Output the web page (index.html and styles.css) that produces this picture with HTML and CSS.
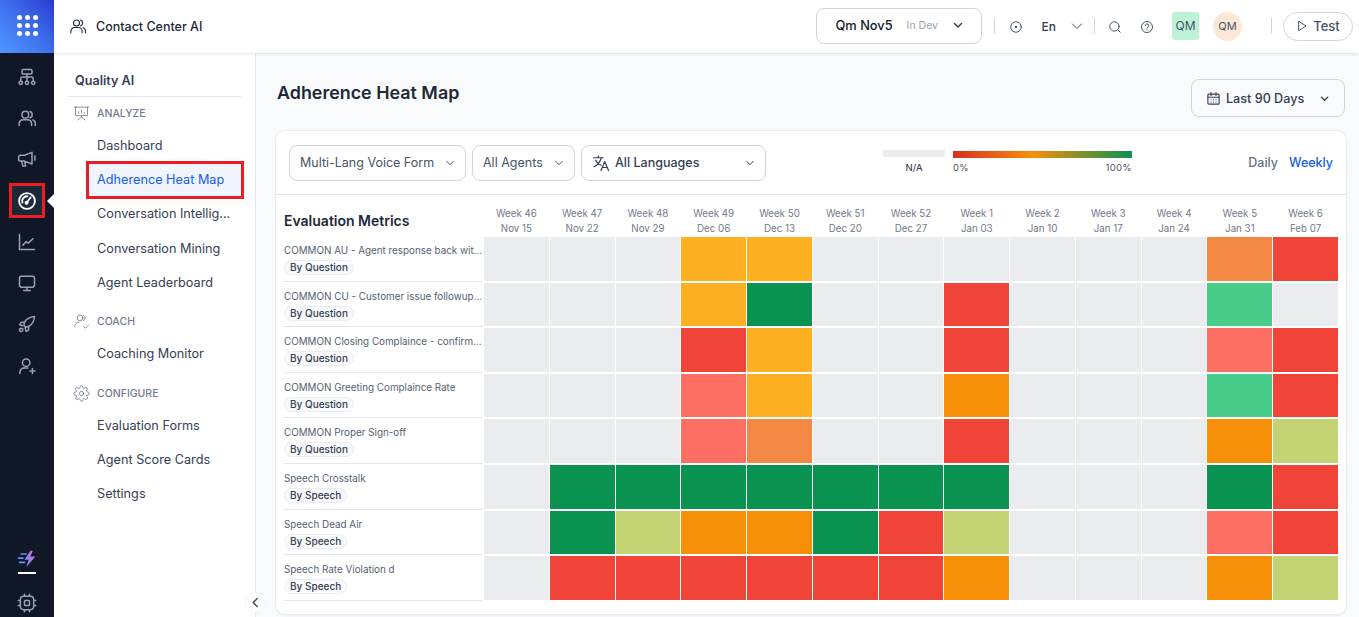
FILE: index.html
```html
<!DOCTYPE html>
<html lang="en">

<head>
    <meta charset="UTF-8">
    <meta name="viewport" content="width=device-width, initial-scale=1.0">
    <title>Adherence Heat Map</title>
    <link rel="stylesheet" href="styles.css">
</head>

<body>
    <aside class="rail">
        <div class="logo">
            <i></i><i></i><i></i><i></i><i></i><i></i><i></i><i></i><i></i>
        </div>
        <nav class="rail-icons">
            <span class="rail-item"><svg viewBox="0 0 24 24"><rect x="6" y="3" width="12" height="5.5" rx="1.5"/><path d="M12 8.5V17M4.5 17v-3a2 2 0 0 1 2-2h11a2 2 0 0 1 2 2v3"/><circle cx="4.5" cy="19" r="2"/><circle cx="12" cy="19" r="2"/><circle cx="19.5" cy="19" r="2"/></svg></span>
            <span class="rail-item"><svg viewBox="0 0 24 24"><circle cx="10" cy="8" r="4"/><path d="M2.5 21v-2a5 5 0 0 1 5-5h5a5 5 0 0 1 5 5v2M15.5 4.2a4 4 0 0 1 0 7.6M19 14.3a5 5 0 0 1 3 4.7v2"/></svg></span>
            <span class="rail-item"><svg viewBox="0 0 24 24"><path d="M2 9.500a2 2 0 0 1 2-2h5L18 4v14l-9-3.500H4a2 2 0 0 1-2-2zM5.500 14.500l1.500 6h3.500l-1.500-5.800M21.500 8.500v5"/></svg></span>
            <span class="rail-item active"><svg viewBox="0 0 24 24"><circle cx="12" cy="12" r="9.500"/><path d="M12 13.500l4.500-6M6.500 14a5.800 5.800 0 0 1 6-7.700"/><circle cx="11.500" cy="14" r="1.300"/></svg></span>
            <span class="rail-item"><svg viewBox="0 0 24 24"><path d="M3 3v18h18M7 16l4-4.500 2.500 2L19 8"/></svg></span>
            <span class="rail-item"><svg viewBox="0 0 24 24"><rect x="3" y="4" width="18" height="13" rx="2.500"/><path d="M12 17v4M8 21h8"/></svg></span>
            <span class="rail-item"><svg viewBox="0 0 24 24"><path d="M9 15c-1-2-1-3 0-5 2-4 6-6.500 12-7-.5 6-3 10-7 12-2 1-3 1-5 0zM9 10H5l-2 3 4 1M14 15v4l-3 2-1-4"/><circle cx="5" cy="19" r="2"/></svg></span>
            <span class="rail-item"><svg viewBox="0 0 24 24"><circle cx="11" cy="8" r="4.500"/><path d="M3.500 21v-1.500a5 5 0 0 1 5-5H13M18.500 15v6M15.500 18h6"/></svg></span>
        </nav>
        <div class="rail-bottom">
            <span class="bolt">
                <svg viewBox="0 0 24 24">
                    <defs>
                        <linearGradient id="boltfill" x1="0" y1="1" x2="1" y2="0">
                            <stop offset="0" stop-color="#6f8cf5"/>
                            <stop offset="1" stop-color="#d36fd8"/>
                        </linearGradient>
                    </defs>
                    <path class="bolt-shape" d="M16 2l-7 11h5l-3 9 11-13h-6l3-7z"/>
                    <path class="bolt-lines" d="M5 6h6M2 11h5M3 16h6"/>
                </svg>
            </span>
            <span class="bolt-line"></span>
            <span class="rail-item chip"><svg viewBox="0 0 24 24"><rect x="4" y="4" width="16" height="16" rx="4"/><rect x="9" y="9" width="6" height="6" rx="1"/><path d="M9 1.500V4M15 1.500V4M9 20v2.500M15 20v2.500M1.500 9H4M1.500 15H4M20 9h2.500M20 15h2.500"/></svg></span>
        </div>
    </aside>

    <div class="page">
        <header class="topbar">
            <div class="app-name">
                <svg class="line-icon" viewBox="0 0 24 24"><circle cx="10" cy="8" r="4"/><path d="M2.500 21v-2a5 5 0 0 1 5-5h5a5 5 0 0 1 5 5v2M15.500 4.200a4 4 0 0 1 0 7.600M19 14.300a5 5 0 0 1 3 4.700v2"/></svg>
                <span>Contact Center AI</span>
            </div>
            <div class="top-actions">
                <div class="project">
                    <span class="project-name">Qm Nov5</span>
                    <span class="project-env">In Dev</span>
                    <svg class="chev" viewBox="0 0 12 12"><path d="M2.500 4.500L6 8l3.500-3.500"/></svg>
                </div>
                <span class="vbar"></span>
                <svg class="tool tool-record" viewBox="0 0 24 24"><circle cx="12" cy="12" r="9"/><circle class="dot" cx="12" cy="12" r="2"/></svg>
                <span class="lang">En</span>
                <svg class="chev lang-chev" viewBox="0 0 12 12"><path d="M1.500 4L6 8.500 10.500 4"/></svg>
                <span class="vbar vbar-lang"></span>
                <svg class="tool tool-search" viewBox="0 0 24 24"><circle cx="11" cy="11" r="8"/><path d="M17 17l4 4"/></svg>
                <svg class="tool tool-help" viewBox="0 0 24 24"><circle cx="12" cy="12" r="9.500"/><path d="M9.200 9.500a2.900 2.900 0 1 1 4.300 2.500c-1 .6-1.500 1.200-1.500 2.200M12 17.200v.1"/></svg>
                <span class="badge-square">QM</span>
                <span class="badge-round">QM</span>
                <span class="vbar vbar-test"></span>
                <div class="test-btn">
                    <svg viewBox="0 0 12 12"><path d="M3 1.500L10 6l-7 4.500z"/></svg>
                    <span>Test</span>
                </div>
            </div>
        </header>

        <div class="content">
            <aside class="side">
                <h2 class="side-title">Quality AI</h2>

                <div class="side-group group-analyze">
                    <svg viewBox="0 0 24 24"><path d="M2 3h20M3.500 3v12h17V3M12 15v2M7 21l5-4 5 4M8 11.500v-2M12 11.500v-4M16 11.500v-1"/></svg>
                    <span>ANALYZE</span>
                </div>
                <a class="side-link">Dashboard</a>
                <a class="side-link current">Adherence Heat Map</a>
                <a class="side-link">Conversation Intellig...</a>
                <a class="side-link">Conversation Mining</a>
                <a class="side-link">Agent Leaderboard</a>

                <div class="side-group group-coach">
                    <svg viewBox="0 0 24 24"><circle cx="10" cy="7" r="4"/><path d="M2.500 20v-1a6 6 0 0 1 6-6M15 3.500a4 4 0 0 1 0 7M15 19l2.500 2.500L22 17"/></svg>
                    <span>COACH</span>
                </div>
                <a class="side-link">Coaching Monitor</a>

                <div class="side-group group-config">
                    <svg viewBox="0 0 24 24"><circle cx="12" cy="12" r="3"/><path d="M19.400 15a1.650 1.650 0 0 0 .33 1.820l.06.06a2 2 0 1 1-2.830 2.830l-.06-.06a1.650 1.650 0 0 0-2.820 1.170V21a2 2 0 1 1-4 0v-.09A1.650 1.650 0 0 0 7.260 19.800l-.06.06a2 2 0 1 1-2.830-2.830l.06-.06a1.650 1.650 0 0 0-1.170-2.820H3a2 2 0 1 1 0-4h.09A1.650 1.650 0 0 0 4.200 7.260l-.06-.06a2 2 0 1 1 2.830-2.830l.06.06a1.650 1.650 0 0 0 2.820-1.170V3a2 2 0 1 1 4 0v.09a1.650 1.650 0 0 0 2.820 1.170l.06-.06a2 2 0 1 1 2.830 2.830l-.06.06a1.650 1.650 0 0 0 1.170 2.820H21a2 2 0 1 1 0 4h-.09a1.650 1.650 0 0 0-1.510 1z"/></svg>
                    <span>CONFIGURE</span>
                </div>
                <a class="side-link">Evaluation Forms</a>
                <a class="side-link">Agent Score Cards</a>
                <a class="side-link">Settings</a>

                <span class="collapse">
                    <svg viewBox="0 0 12 12"><path d="M8 1.500L3.500 6 8 10.500"/></svg>
                </span>
            </aside>

            <main class="main">
                <div class="main-head">
                    <h1>Adherence Heat Map</h1>
                    <div class="date-btn">
                        <svg class="line-icon" viewBox="0 0 24 24"><rect x="3" y="5" width="18" height="16" rx="1.500"/><path d="M3 10h18M8 2.500V7M16 2.500V7M8 14h.1M12 14h.1M16 14h.1M8 17.500h.1M12 17.500h.1M16 17.500h.1"/></svg>
                        <span>Last 90 Days</span>
                        <svg class="chev" viewBox="0 0 12 12"><path d="M2.500 4.500L6 8l3.500-3.500"/></svg>
                    </div>
                </div>

                <section class="card">
                    <div class="toolbar">
                        <div class="select select-form"><span>Multi-Lang Voice Form</span><svg class="chev" viewBox="0 0 12 12"><path d="M2 4l4 4 4-4"/></svg></div>
                        <div class="select select-agents"><span>All Agents</span><svg class="chev" viewBox="0 0 12 12"><path d="M2 4l4 4 4-4"/></svg></div>
                        <div class="select select-lang">
                            <svg class="line-icon" viewBox="0 0 24 24"><path d="M2 5h13M8.500 2.500V5M12.500 5C11 10 7 15 2.500 17M5 8.500c1.500 3 4 5.500 7 6.500M12 22l5-12 5 12M13.800 18h6.400"/></svg>
                            <span>All Languages</span>
                            <svg class="chev" viewBox="0 0 12 12"><path d="M2 4l4 4 4-4"/></svg>
                        </div>
                        <div class="legend">
                            <div class="legend-na"><b></b><span>N/A</span></div>
                            <div class="legend-scale"><b></b><div class="legend-ends"><span>0%</span><span>100%</span></div></div>
                        </div>
                        <div class="range">
                            <span>Daily</span>
                            <span class="on">Weekly</span>
                        </div>
                    </div>

                    <div class="heat">
                        <div class="heat-title">Evaluation Metrics</div>
                        <div class="wk">Week 46<br>Nov 15</div>
                        <div class="wk">Week 47<br>Nov 22</div>
                        <div class="wk">Week 48<br>Nov 29</div>
                        <div class="wk">Week 49<br>Dec 06</div>
                        <div class="wk">Week 50<br>Dec 13</div>
                        <div class="wk">Week 51<br>Dec 20</div>
                        <div class="wk">Week 52<br>Dec 27</div>
                        <div class="wk">Week 1<br>Jan 03</div>
                        <div class="wk">Week 2<br>Jan 10</div>
                        <div class="wk">Week 3<br>Jan 17</div>
                        <div class="wk">Week 4<br>Jan 24</div>
                        <div class="wk">Week 5<br>Jan 31</div>
                        <div class="wk">Week 6<br>Feb 07</div>

                        <div class="metric"><p>COMMON AU - Agent response back wit...</p><span>By Question</span></div>
                        <i class="na"></i><i class="na"></i><i class="na"></i><i class="amber"></i><i class="amber"></i><i class="na"></i><i class="na"></i><i class="na"></i><i class="na"></i><i class="na"></i><i class="na"></i><i class="coral"></i><i class="red"></i>

                        <div class="metric"><p>COMMON CU - Customer issue followup...</p><span>By Question</span></div>
                        <i class="na"></i><i class="na"></i><i class="na"></i><i class="amber"></i><i class="green"></i><i class="na"></i><i class="na"></i><i class="red"></i><i class="na"></i><i class="na"></i><i class="na"></i><i class="mint"></i><i class="na"></i>

                        <div class="metric"><p>COMMON Closing Complaince - confirm...</p><span>By Question</span></div>
                        <i class="na"></i><i class="na"></i><i class="na"></i><i class="red"></i><i class="amber"></i><i class="na"></i><i class="na"></i><i class="red"></i><i class="na"></i><i class="na"></i><i class="na"></i><i class="salmon"></i><i class="red"></i>

                        <div class="metric"><p>COMMON Greeting Complaince Rate</p><span>By Question</span></div>
                        <i class="na"></i><i class="na"></i><i class="na"></i><i class="salmon"></i><i class="amber"></i><i class="na"></i><i class="na"></i><i class="orange"></i><i class="na"></i><i class="na"></i><i class="na"></i><i class="mint"></i><i class="red"></i>

                        <div class="metric"><p>COMMON Proper Sign-off</p><span>By Question</span></div>
                        <i class="na"></i><i class="na"></i><i class="na"></i><i class="salmon"></i><i class="coral"></i><i class="na"></i><i class="na"></i><i class="red"></i><i class="na"></i><i class="na"></i><i class="na"></i><i class="orange"></i><i class="lime"></i>

                        <div class="metric"><p>Speech Crosstalk</p><span>By Speech</span></div>
                        <i class="na"></i><i class="green"></i><i class="green"></i><i class="green"></i><i class="green"></i><i class="green"></i><i class="green"></i><i class="green"></i><i class="na"></i><i class="na"></i><i class="na"></i><i class="green"></i><i class="red"></i>

                        <div class="metric"><p>Speech Dead Air</p><span>By Speech</span></div>
                        <i class="na"></i><i class="green"></i><i class="lime"></i><i class="orange"></i><i class="orange"></i><i class="green"></i><i class="red"></i><i class="lime"></i><i class="na"></i><i class="na"></i><i class="na"></i><i class="salmon"></i><i class="red"></i>

                        <div class="metric"><p>Speech Rate Violation d</p><span>By Speech</span></div>
                        <i class="na"></i><i class="red"></i><i class="red"></i><i class="red"></i><i class="red"></i><i class="red"></i><i class="red"></i><i class="orange"></i><i class="na"></i><i class="na"></i><i class="na"></i><i class="orange"></i><i class="lime"></i>
                    </div>
                </section>
            </main>
        </div>
    </div>
</body>

</html>
```

FILE: styles.css
```css
* {
    margin: 0;
    padding: 0;
    box-sizing: border-box;
}

html,
body {
    height: 617px;
    overflow: hidden;
}

body {
    display: flex;
    font-family: Inter, "Liberation Sans", sans-serif;
    color: #344054;
    background: #f9fafb;
}

svg {
    display: block;
    fill: none;
    stroke: currentColor;
    stroke-width: 1.5;
    stroke-linecap: round;
    stroke-linejoin: round;
}

/* left dark rail */
.rail {
    flex: 0 0 54px;
    display: flex;
    flex-direction: column;
    background: #101828;
    color: #98a2b3;
}

.logo {
    height: 53px;
    padding: 15px 0 0 17px;
    display: grid;
    grid-template-columns: repeat(3, 5px);
    grid-auto-rows: 5px;
    gap: 3px 3px;
    background: linear-gradient(45deg, #4f97ff 0%, #3f70ee 50%, #2a3ad0 100%);
}

.logo i {
    background: #fff;
    border-radius: 50%;
}

.rail-icons {
    padding-top: 3px;
    display: flex;
    flex-direction: column;
    align-items: center;
}

.rail-item {
    position: relative;
    width: 36px;
    height: 41.3px;
    display: flex;
    align-items: center;
    justify-content: center;
}

.rail-item svg {
    width: 20px;
    height: 20px;
    stroke-width: 1.8;
}

.rail-item.active {
    color: #fff;
}

.rail-item.active svg {
    position: relative;
    stroke-width: 2.2;
}

.rail-item.active::before {
    content: "";
    position: absolute;
    left: 0;
    right: 0;
    top: 3px;
    bottom: 3px;
    border: 3px solid #ed1c24;
    background: #1d2939;
}

.rail-item.active::after {
    content: "";
    position: absolute;
    left: 38px;
    top: 14px;
    border-top: 7px solid transparent;
    border-bottom: 7px solid transparent;
    border-right: 7px solid #fff;
}

.rail-bottom {
    margin-top: auto;
    display: flex;
    flex-direction: column;
    align-items: center;
}

.bolt svg {
    width: 20px;
    height: 20px;
}

.bolt-shape {
    fill: url(#boltfill);
    stroke: none;
}

.bolt-lines {
    stroke: #6f8cf5;
    stroke-width: 2;
}

.bolt-line {
    width: 18px;
    height: 2px;
    margin-top: 3px;
    background: #fff;
}

.chip {
    height: 28px;
    margin-top: 15px;
    color: #8fa3b8;
}

/* top bar */
.page {
    flex: 1;
    min-width: 0;
    display: flex;
    flex-direction: column;
}

.topbar {
    position: relative;
    z-index: 2;
    flex: 0 0 53px;
    display: flex;
    align-items: center;
    justify-content: space-between;
    padding: 0 6px 1px 15px;
    background: #fff;
    box-shadow: 0 1px 3px rgba(16, 24, 40, .12);
}

.app-name {
    display: flex;
    align-items: center;
    gap: 9px;
    font-size: 12.500px;
    font-weight: 450;
    color: #1d2939;
}

.line-icon {
    width: 18px;
    height: 18px;
}

.top-actions {
    display: flex;
    align-items: center;
    color: #475467;
}

.chev {
    flex: none;
    width: 12px;
    height: 12px;
}

.project {
    width: 166px;
    height: 36px;
    display: flex;
    align-items: center;
    padding: 0 17px 2px 19px;
    border: 1px solid #d0d5dd;
    border-radius: 8px;
}

.project-name {
    font-size: 12.800px;
    font-weight: 450;
    color: #101828;
}

.project-env {
    margin-left: 14px;
    font-size: 10.500px;
    color: #98a2b3;
}

.project .chev {
    margin-left: auto;
    color: #344054;
}

.vbar {
    width: 1px;
    height: 16px;
    margin-left: 12px;
    background: #d0d5dd;
}

.tool {
    width: 14px;
    height: 14px;
    stroke-width: 1.7;
}

.tool-record {
    margin: 2px 0 0 14px;
}

.tool-record .dot {
    fill: currentColor;
    stroke: none;
}

.lang {
    margin-left: 19px;
    font-size: 12px;
    font-weight: 450;
    color: #344054;
}

.lang-chev {
    margin-left: 15px;
    stroke-width: 1;
}

.vbar-lang {
    margin-left: 11px;
}

.tool-search {
    margin: 2px 0 0 13px;
}

.tool-help {
    margin: 2px 0 0 18px;
}

.badge-square {
    width: 27px;
    height: 28px;
    margin-left: 18px;
    border-radius: 3px;
    background: #bdf2d7;
    color: #475467;
    font-size: 12px;
    line-height: 28px;
    text-align: center;
}

.badge-round {
    width: 29px;
    height: 29px;
    margin-left: 14px;
    border-radius: 50%;
    background: #fde8d7;
    color: #475467;
    font-size: 11px;
    line-height: 29px;
    text-align: center;
}

.vbar-test {
    margin-left: 29px;
}

.test-btn {
    width: 70px;
    height: 29px;
    margin-left: 11px;
    display: flex;
    align-items: center;
    justify-content: center;
    gap: 5px;
    border: 1px solid #d0d5dd;
    border-radius: 15px;
    font-size: 13px;
    font-weight: 450;
    color: #475467;
}

.test-btn svg {
    width: 12px;
    height: 12px;
    stroke-width: 1;
}

/* section menu */
.content {
    flex: 1;
    min-height: 0;
    display: flex;
}

.side {
    position: relative;
    flex: 0 0 202px;
    padding: 0 14px;
    background: #fff;
    border-right: 1px solid #e4e7ec;
}

.side-title {
    height: 44px;
    padding: 20px 0 0 7px;
    border-bottom: 1px solid #e4e7ec;
    font-size: 12.600px;
    font-weight: 600;
    line-height: 16px;
    color: #344054;
}

.side-group {
    display: flex;
    align-items: center;
    gap: 7px;
    height: 30px;
    padding-left: 5px;
    font-size: 10.500px;
    font-weight: 500;
    color: #727c8e;
}

.side-group svg {
    width: 17px;
    height: 17px;
    stroke-width: 1.2;
}

.group-analyze {
    margin-top: .5px;
    height: 31.500px;
}

.group-coach {
    margin-top: 6.200px;
    height: 31px;
}

.group-config {
    margin-top: 7px;
    height: 30.600px;
}

.side-link {
    display: block;
    position: relative;
    height: 34.200px;
    padding-left: 29px;
    font-size: 12.700px;
    line-height: 34px;
    color: #344054;
    white-space: nowrap;
}

.side-link.current {
    margin: -2px -3px -1.800px 18px;
    padding-left: 8px;
    height: 38px;
    line-height: 32px;
    border: 3px solid #ed1c24;
    background: #eff4ff;
    color: #155eef;
}

.collapse {
    position: absolute;
    right: -11px;
    bottom: 4px;
    width: 21px;
    height: 21px;
    display: flex;
    align-items: center;
    justify-content: center;
    border-radius: 50%;
    border: 1px solid #f2f4f7;
    background: #fff;
    color: #344054;
}

.collapse svg {
    width: 11px;
    height: 11px;
}

/* main area */
.main {
    flex: 1;
    min-width: 0;
    padding: 0 12px 0 19px;
}

.main-head {
    height: 77px;
    display: flex;
    justify-content: space-between;
    padding-top: 26px;
    padding-left: 2px;
}

.main-head h1 {
    font-size: 17.900px;
    font-weight: 600;
    line-height: 28px;
    color: #1d2939;
}

.date-btn {
    width: 154px;
    height: 38px;
    display: flex;
    align-items: center;
    padding: 0 14px;
    gap: 5px;
    margin-right: 2px;
    border: 1px solid #d0d5dd;
    border-radius: 8px;
    font-size: 12.600px;
    font-weight: 450;
    color: #344054;
}

.date-btn .line-icon {
    width: 15px;
    height: 15px;
    stroke-width: 1.8;
}

.date-btn .chev {
    margin-left: auto;
    width: 11px;
    height: 11px;
}

.card {
    height: 485px;
    background: #fff;
    border: 1px solid #eaecf0;
    border-radius: 10px;
    box-shadow: 0 1px 2px rgba(16, 24, 40, .05);
}

.toolbar {
    height: 64px;
    display: flex;
    align-items: center;
    gap: 6px;
    padding: 0 13px;
    border-bottom: 1px solid #e4e7ec;
}

.select {
    height: 36px;
    display: flex;
    align-items: center;
    border: 1px solid #d0d5dd;
    border-radius: 8px;
    font-size: 12.500px;
    color: #475467;
}

.select .chev {
    margin-left: auto;
    width: 10px;
    height: 10px;
    stroke-width: 1.2;
}

.select-form {
    width: 177px;
    padding: 0 10px;
}

.select-agents {
    width: 103px;
    padding: 0 10px;
}

.select-lang {
    width: 185px;
    padding: 0 10px;
    gap: 5px;
    font-weight: 450;
    color: #344054;
}

.select-lang .line-icon {
    width: 18px;
    height: 18px;
    stroke-width: 1.6;
}

.legend {
    margin-left: 111px;
    display: flex;
    gap: 8px;
    font-size: 9.500px;
    color: #475467;
    align-self: flex-start;
    padding-top: 19px;
}

.legend b {
    display: block;
    height: 7px;
}

.legend-na {
    width: 62px;
    text-align: center;
}

.legend-na b {
    background: #eaecf0;
}

.legend-na span {
    display: block;
    margin-top: 5px;
    line-height: 12px;
    color: #1d2939;
}

.legend-scale {
    width: 179px;
    padding-top: 1px;
}

.legend-scale b {
    background: linear-gradient(90deg, #d92d20 0%, #f79009 45%, #099250 100%);
}

.legend-ends {
    display: flex;
    justify-content: space-between;
    margin-top: 4px;
    line-height: 12px;
    letter-spacing: .3px;
}

.range {
    margin-left: auto;
    display: flex;
    gap: 11px;
    font-size: 12.500px;
    font-weight: 450;
    color: #667085;
}

.range .on {
    color: #155eef;
}

.heat {
    display: grid;
    grid-template-columns: 199px repeat(13, 1fr);
    grid-template-rows: 40px repeat(8, 43.600px);
    gap: 2px 1px;
    padding: 0 8px;
}

.heat-title {
    align-self: center;
    padding-top: 11px;
    font-size: 14px;
    font-weight: 600;
    white-space: nowrap;
    color: #1d2939;
}

.wk {
    padding-top: 11px;
    font-size: 9.750px;
    line-height: 15px;
    color: #70798b;
    text-align: center;
    white-space: nowrap;
}

.metric {
    position: relative;
    padding-top: 7px;
    font-size: 9.850px;
    color: #535f72;
}

.metric::after {
    content: "";
    position: absolute;
    left: 0;
    right: 0;
    bottom: -1px;
    height: 1px;
    background: #e4e7ec;
}

.metric p {
    line-height: 13px;
    white-space: nowrap;
}

.metric span {
    display: inline-block;
    margin-top: 3px;
    padding: 0 5px;
    height: 15px;
    border: 1px solid #eaecf0;
    border-radius: 8px;
    background: #f9fafb;
    font-size: 10px;
    font-weight: 450;
    line-height: 13px;
    color: #344054;
}

.heat > i {
    display: block;
}

.na { background: #eaecf0; }
.amber { background: #fdb022; }
.coral { background: #f38744; }
.red { background: #f04438; }
.green { background: #099250; }
.mint { background: #47cd89; }
.salmon { background: #fd6f63; }
.orange { background: #f79009; }
.lime { background: #c4d374; }
```
